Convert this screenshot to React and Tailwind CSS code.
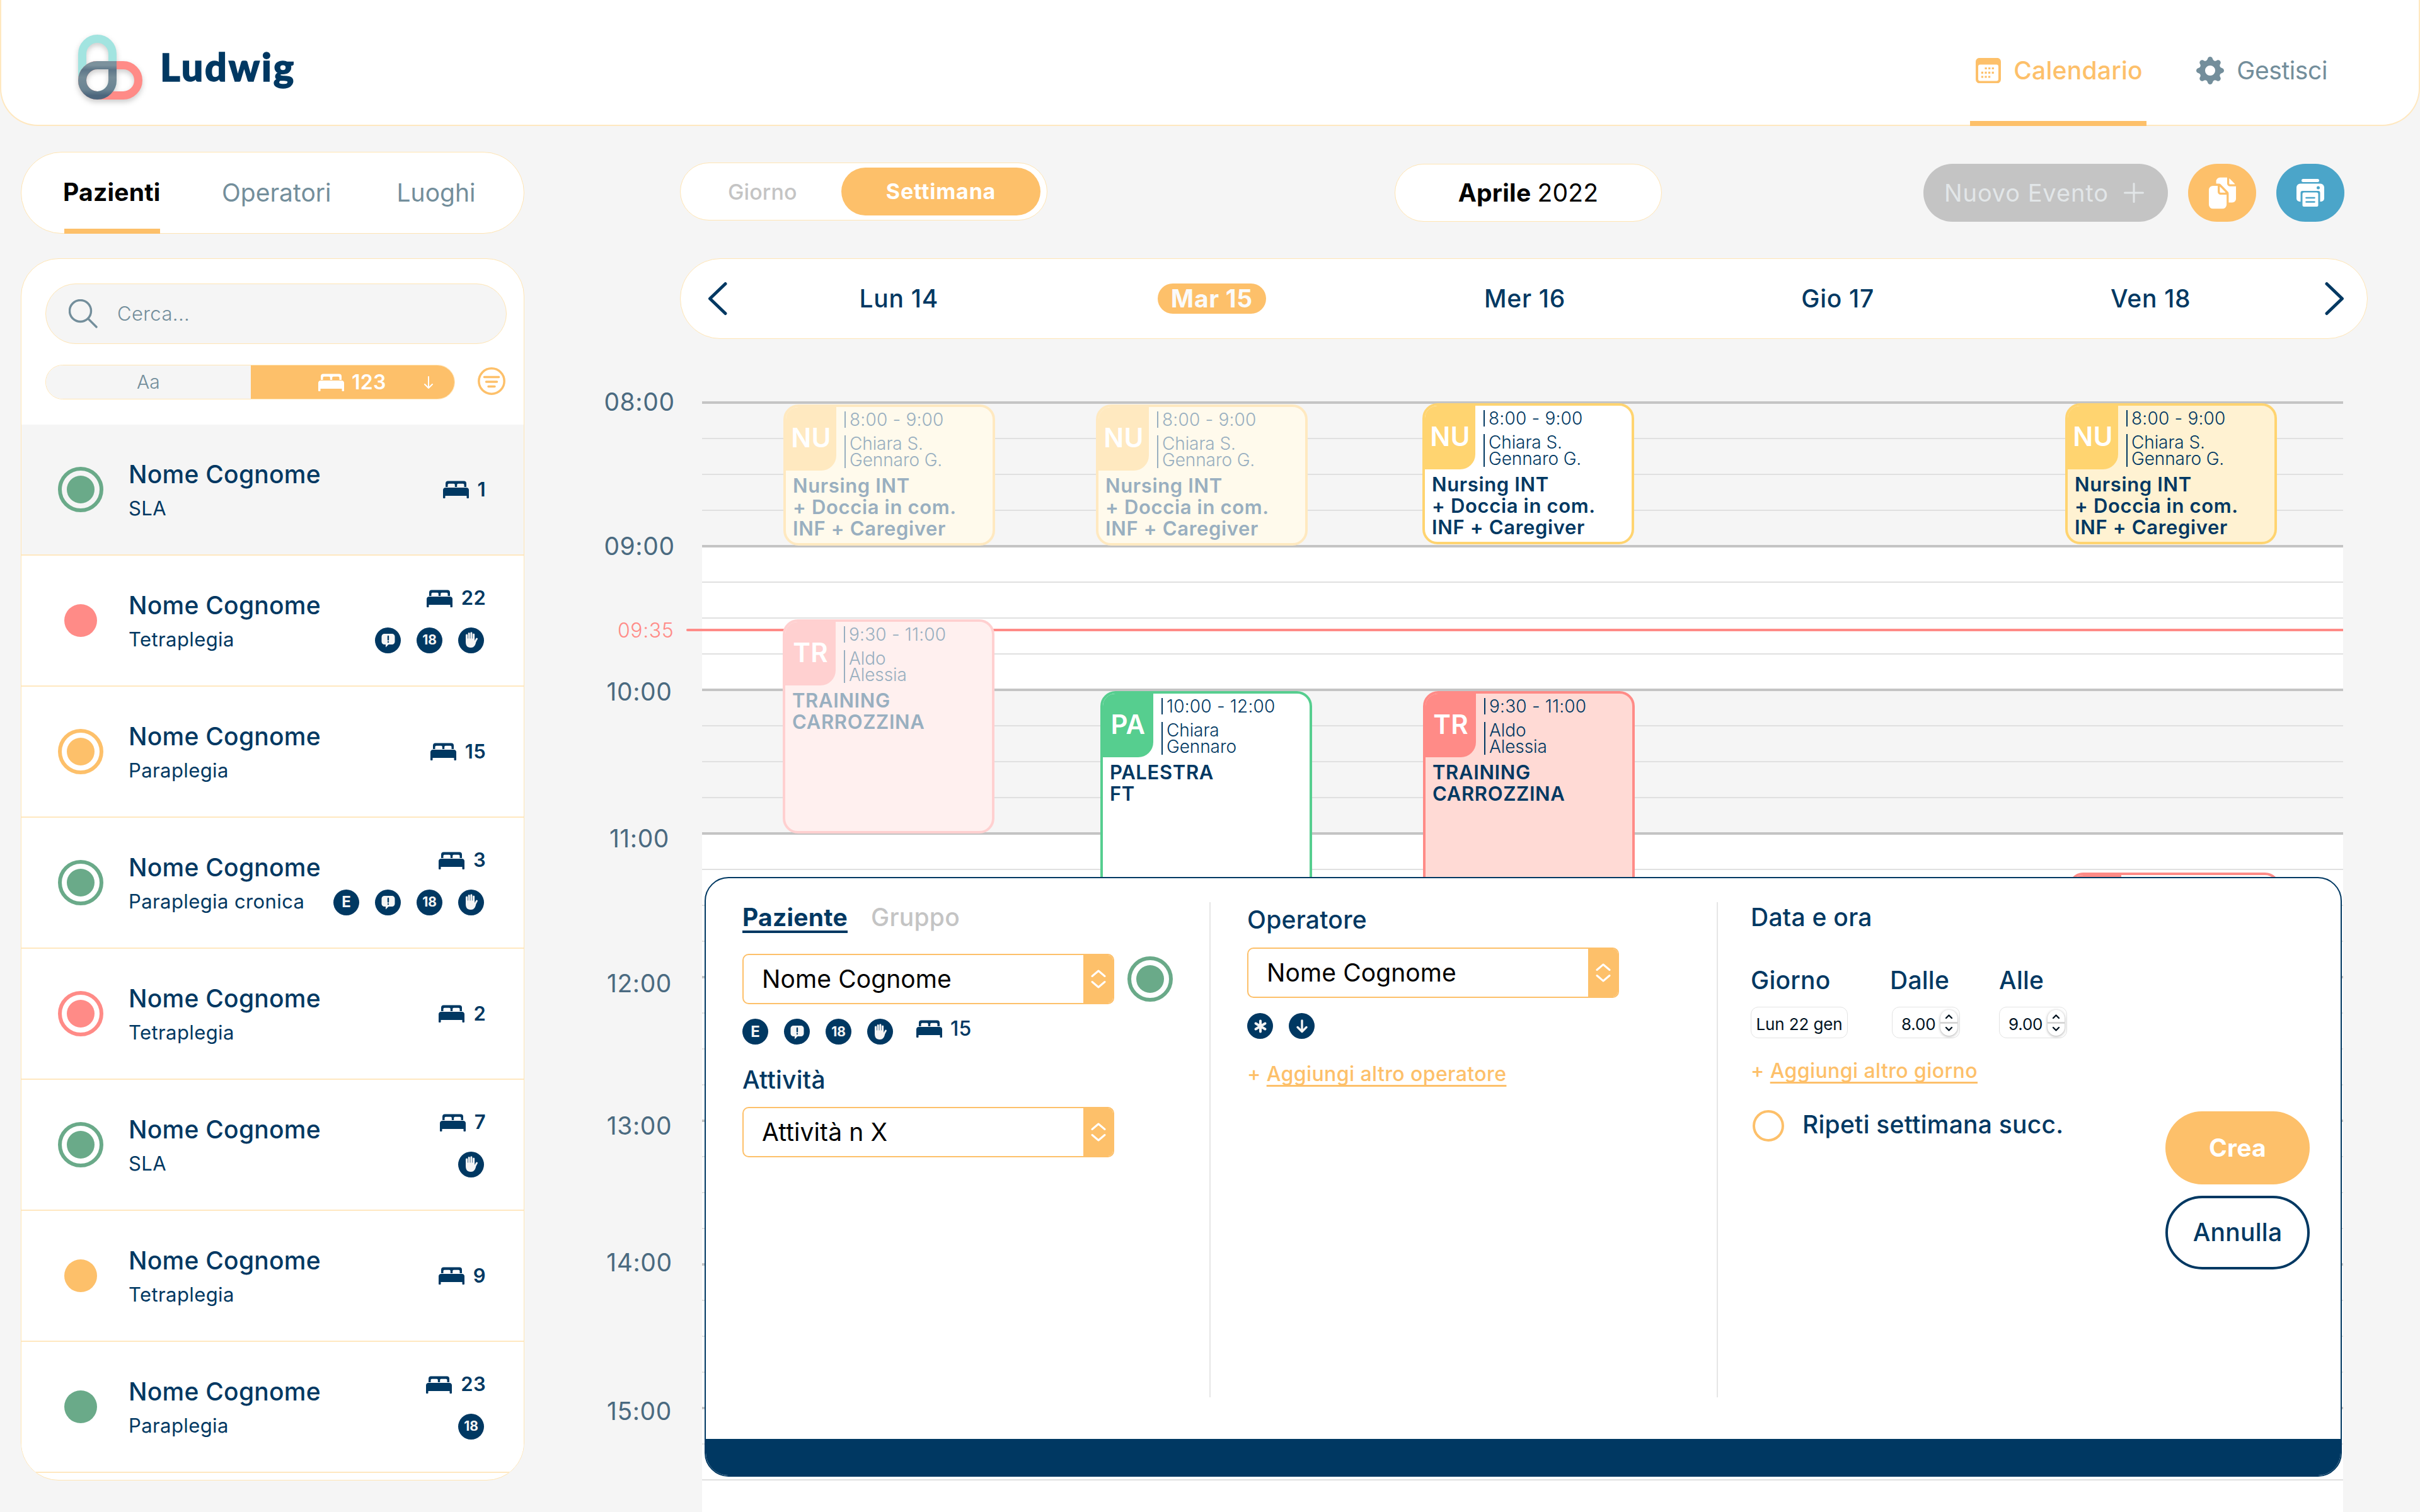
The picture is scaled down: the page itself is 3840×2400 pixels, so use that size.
import { BsGearFill } from 'react-icons/bs'
import { IoDocuments } from 'react-icons/io5'

const patients = [
  { diagnosis: 'SLA', bed: 1, dot: 'green', ring: true, badges: [], selected: true },
  { diagnosis: 'Tetraplegia', bed: 22, dot: 'red', ring: false, badges: ['chat', '18', 'hand'] },
  { diagnosis: 'Paraplegia', bed: 15, dot: 'yellow', ring: true, badges: [] },
  { diagnosis: 'Paraplegia cronica', bed: 3, dot: 'green', ring: true, badges: ['E', 'chat', '18', 'hand'] },
  { diagnosis: 'Tetraplegia', bed: 2, dot: 'red', ring: true, badges: [] },
  { diagnosis: 'SLA', bed: 7, dot: 'green', ring: true, badges: ['hand'] },
  { diagnosis: 'Tetraplegia', bed: 9, dot: 'yellow', ring: false, badges: [] },
  { diagnosis: 'Paraplegia', bed: 23, dot: 'green', ring: false, badges: ['18'] }
]

const days = ['Lun 14', 'Mar 15', 'Mer 16', 'Gio 17', 'Ven 18']

const hours = [
  { label: '08:00', className: '', band: 'bg-[#f5f5f5]' },
  { label: '09:00', className: 'mt-[181px]', band: 'bg-white' },
  { label: '10:00', className: 'mt-[183px]', band: 'bg-[#f5f5f5]' },
  { label: '11:00', className: 'mt-[185px]', band: 'bg-white' },
  { label: '12:00', className: 'mt-[182px]', band: 'bg-white' },
  { label: '13:00', className: 'mt-[178px]', band: 'bg-white' },
  { label: '14:00', className: 'mt-[169px]', band: 'bg-white' },
  { label: '15:00', className: 'mt-[188px]', band: 'bg-white' }
]

const eventStyles = {
  yellowPast: { card: 'border-[#ffe9c0] bg-[#fffaec] text-[#99afc0]', tag: 'bg-[#ffe9c0]', bar: 'border-[#99afc0]' },
  yellow: { card: 'border-[#ffd470] bg-white text-[#003862]', tag: 'bg-[#ffd470]', bar: 'border-[#003862]' },
  yellowSoft: { card: 'border-[#ffd470] bg-[#fff2d2] text-[#003862]', tag: 'bg-[#ffd470]', bar: 'border-[#003862]' },
  redPast: { card: 'border-[#ffd0d0] bg-[#fff0ef] text-[#99afc0]', tag: 'bg-[#ffd0d0]', bar: 'border-[#99afc0]' },
  red: { card: 'border-[#ff8b87] bg-[#ffdad5] text-[#003862]', tag: 'bg-[#ff8b87]', bar: 'border-[#003862]' },
  green: { card: 'border-[#56ce8f] bg-white text-[#003862]', tag: 'bg-[#56ce8f]', bar: 'border-[#003862]' }
}

const nursing = {
  code: 'NU',
  time: '8:00 - 9:00',
  people: ['Chiara S.', 'Gennaro G.'],
  title: ['Nursing INT', '+ Doccia in com.', 'INF + Caregiver']
}

const training = {
  code: 'TR',
  time: '9:30 - 11:00',
  people: ['Aldo', 'Alessia'],
  title: ['TRAINING', 'CARROZZINA']
}

const events = [
  { ...nursing, style: 'yellowPast', pos: 'left-[129px] top-[5px] h-[224px]' },
  { ...nursing, style: 'yellowPast', pos: 'left-[625px] top-[5px] h-[224px]' },
  { ...nursing, style: 'yellow', pos: 'left-[1143px] top-[3px] h-[224px]' },
  { ...nursing, style: 'yellowSoft', pos: 'left-[2163px] top-[3px] h-[224px]' },
  { ...training, style: 'redPast', pos: 'left-[128px] top-[346px] h-[340px]' },
  {
    code: 'PA',
    time: '10:00 - 12:00',
    people: ['Chiara', 'Gennaro'],
    title: ['PALESTRA', 'FT'],
    style: 'green',
    pos: 'left-[632px] top-[460px] h-[340px]'
  },
  { ...training, style: 'red', pos: 'left-[1144px] top-[460px] h-[340px]' }
]

const dotColors = {
  green: { bg: 'bg-[#6aaa89]', border: 'border-[#6aaa89]' },
  red: { bg: 'bg-[#ff8b87]', border: 'border-[#ff8b87]' },
  yellow: { bg: 'bg-[#fdc06a]', border: 'border-[#fdc06a]' }
}

const Logo = () => (
  <svg className="h-[120px] w-[120px] drop-shadow-[0_4px_4px_rgba(0,0,0,0.2)]" viewBox="0 0 120 120" fill="none" strokeWidth="13">
    <defs>
      <linearGradient id="loop" x1="0" y1="0" x2="0" y2="1">
        <stop offset="0" stopColor="#7c929d" />
        <stop offset="0.15" stopColor="#5d7688" />
        <stop offset="0.4" stopColor="#758c98" />
        <stop offset="0.8" stopColor="#6b8493" />
        <stop offset="1" stopColor="#4c667d" />
      </linearGradient>
    </defs>
    <rect x="16.500" y="14.500" width="48" height="90" rx="24" stroke="#a2e4e0" />
    <rect x="16.500" y="56.500" width="89" height="48" rx="24" stroke="#ff8b87" />
    <path d="M64.500 56.500H40.500A24 24 0 0 0 16.500 80.500A24 24 0 0 0 64.500 80.500Z" stroke="url(#loop)" />
  </svg>
)

const BedIcon = () => (
  <svg className="h-7 w-[41px] shrink-0" viewBox="0 0 41 28" fill="currentColor">
    <path d="M4 10V4.500A4 4 0 0 1 8 0.500H33A4 4 0 0 1 37 4.500V10H33.500V6.500A1.800 1.800 0 0 0 31.700 4.700H24A1.800 1.800 0 0 0 22.200 6.500V10H18.800V6.500A1.800 1.800 0 0 0 17 4.700H9.300A1.800 1.800 0 0 0 7.500 6.500V10Z" />
    <path d="M0 27V14.500A4 4 0 0 1 4 11H37A4 4 0 0 1 41 14.500V27A1 1 0 0 1 40 28H38.500A1 1 0 0 1 37.500 27V24H3.500V27A1 1 0 0 1 2.500 28H1A1 1 0 0 1 0 27Z" />
  </svg>
)

const HandIcon = () => (
  <svg className="h-[26px] w-[22px]" viewBox="0 0 22 26" fill="none" stroke="#f5f5f5" strokeLinecap="round">
    <path d="M3.500 14V5M7.200 12V2.500M10.900 12V1.800M14.600 13V4" strokeWidth="3" />
    <path d="M15.500 18L19.500 11" strokeWidth="2.800" />
    <path d="M2 10.500H16.100V15L18.500 14C18 20 16 25 10 25C4 25 2 21 2 16Z" fill="#f5f5f5" stroke="none" />
  </svg>
)

const PrinterIcon = () => (
  <svg className="h-11 w-11" viewBox="0 0 44 44" fill="currentColor">
    <rect x="8" y="0" width="28" height="5" rx="2.500" />
    <path d="M6 7.500H38A6 6 0 0 1 44 13.500V31A5 5 0 0 1 39 36H37.500V22A3 3 0 0 0 34.500 19H9.500A3 3 0 0 0 6.500 22V36H5A5 5 0 0 1 0 31V13.500A6 6 0 0 1 6 7.500ZM34.500 11.500A2.500 2.500 0 1 0 34.500 16.500A2.500 2.500 0 1 0 34.500 11.500Z" fillRule="evenodd" />
    <rect x="9.500" y="21.500" width="25" height="22.500" rx="2.500" />
    <path d="M15.500 30H28.500M15.500 36.500H28.500" stroke="#4ba5c9" strokeWidth="2.600" strokeLinecap="round" />
  </svg>
)

const Badge = ({ type }) => (
  <span className="flex size-[41px] shrink-0 items-center justify-center rounded-full bg-[#003862] text-[21px] font-bold tracking-normal text-[#f5f5f5]">
    {type === 'chat' && (
      <svg className="size-6" viewBox="0 0 24 24" fill="#f5f5f5">
        <path d="M6 2H18A4.500 4.500 0 0 1 22.500 6.500V14.500A4.500 4.500 0 0 1 18 19H12.500L8 23.500V19H6A4.500 4.500 0 0 1 1.500 14.500V6.500A4.500 4.500 0 0 1 6 2Z" />
        <path d="M12 6V11.500M12 15V15.100" stroke="#003862" strokeWidth="2.400" strokeLinecap="round" />
      </svg>
    )}
    {type === 'hand' && <HandIcon />}
    {type === 'star' && (
      <svg className="size-6" viewBox="0 0 24 24" stroke="#f5f5f5" strokeWidth="4" strokeLinecap="round">
        <path d="M12 3.500V20.500M4.500 7.500L19.500 16.500M19.500 7.500L4.500 16.500" />
      </svg>
    )}
    {type === 'down' && (
      <svg className="size-6" viewBox="0 0 24 24" fill="none" stroke="#f5f5f5" strokeWidth="3.400" strokeLinecap="round" strokeLinejoin="round">
        <path d="M12 3V20M5 13.500L12 20.500L19 13.500" />
      </svg>
    )}
    {type === '18' && '18'}
    {type === 'E' && <span className="text-2xl">E</span>}
  </span>
)

const StatusDot = ({ color, ring }) => {
  const c = dotColors[color]
  if (!ring) return <span className={`size-[52px] rounded-full ${c.bg}`} />
  return (
    <span className={`flex size-[72px] shrink-0 items-center justify-center rounded-full border-[6px] ${c.border}`}>
      <span className={`size-11 rounded-full ${c.bg}`} />
    </span>
  )
}

const PatientRow = ({ patient }) => (
  <li className={`flex h-[208px] items-center border-b-2 border-[#ffe8c0] pr-[60px] ${patient.selected ? 'bg-[#f5f5f5]' : 'bg-white'}`}>
    <div className="flex w-[170px] justify-center pl-[18px]">
      <StatusDot color={patient.dot} ring={patient.ring} />
    </div>
    <div className="flex-1 pt-[7px] whitespace-nowrap text-[#003862]">
      <p className="text-[39px] leading-[52px] font-medium">Nome Cognome</p>
      <p className="text-[31px] leading-[56px] tracking-[0.4px]">{patient.diagnosis}</p>
    </div>
    <div className="flex flex-col items-end text-[#003862]">
      <div className="flex h-11 items-center gap-3.5 text-[31px] font-semibold tracking-[0.3px]">
        <BedIcon />
        {patient.bed}
      </div>
      {patient.badges.length > 0 && (
        <div className="mt-6 mr-[3px] mb-1.5 flex gap-[25px]">
          {patient.badges.map((b) => <Badge key={b} type={b} />)}
        </div>
      )}
    </div>
  </li>
)

const EventCard = ({ event }) => {
  const s = eventStyles[event.style]
  return (
    <div className={`absolute w-[336px] overflow-hidden rounded-[24px] border-4 ${s.card} ${event.pos}`}>
      <div className="flex h-[101px]">
        <div className={`flex w-[80px] items-center justify-center rounded-br-[24px] pb-1 text-[42px] font-semibold text-white ${s.tag}`}>
          {event.code}
        </div>
        <div className="ml-[13px] pt-[7px] text-[28px] font-light tracking-[0.2px] whitespace-nowrap">
          <p className={`border-l-2 pl-1.5 leading-[26px] ${s.bar}`}>{event.time}</p>
          <div className={`mt-3 border-l-2 pl-1.5 leading-[26px] tracking-[-0.1px] ${s.bar}`}>
            {event.people.map((p) => <p key={p}>{p}</p>)}
          </div>
        </div>
      </div>
      <div className="mt-[7px] pl-[11px] text-[31px] leading-[34px] font-semibold tracking-[0.65px] whitespace-nowrap">
        {event.title.map((t) => <p key={t}>{t}</p>)}
      </div>
    </div>
  )
}

const Select = ({ value }) => (
  <div className="flex h-20 w-[590px] items-center justify-between overflow-hidden rounded-[10px] border-2 border-[#fdc06a] bg-white">
    <span className="pl-[29px] text-[39px] font-normal tracking-[0.1px] text-black">{value}</span>
    <span className="flex h-full w-[47px] items-center justify-center bg-[#fdc06a]">
      <svg className="h-[30px] w-6" viewBox="0 0 24 30" fill="none" stroke="white" strokeWidth="3" strokeLinecap="round" strokeLinejoin="round">
        <path d="M2 10.500L12 2L22 10.500M2 19.500L12 28L22 19.500" />
      </svg>
    </span>
  </div>
)

const TimeInput = ({ value }) => (
  <div className="flex h-[50px] w-[108px] items-center justify-between rounded-[12px] border border-[#e3e3e3] pr-[3px] pl-3.5 text-[26px] tracking-[-0.2px] text-[#00121f]">
    <span className="pt-1">{value}</span>
    <span className="flex h-[41px] w-[27px] items-center justify-center overflow-hidden rounded-full bg-white shadow-[0_1px_4px_rgba(0,0,0,0.35)]">
      <svg className="h-[41px] w-[27px]" viewBox="0 0 27 41" fill="none" stroke="#00121f" strokeWidth="2.400" strokeLinecap="round" strokeLinejoin="round">
        <path d="M0 20.500H27" stroke="#cfcfcf" />
        <path d="M9 13L13.500 8.500L18 13M9 28L13.500 32.500L18 28" />
      </svg>
    </span>
  </div>
)

const BookingForm = () => (
  <div className="absolute top-[755px] left-1 flex h-[952px] w-[2598px] flex-col justify-between overflow-hidden rounded-[38px] border-2 border-[#003862] bg-white font-medium text-[#003862]">
    <div className="mt-[38px] flex h-[786px]">
      <div className="w-[801px] border-r-2 border-[#e6e6e6] pl-[58px]">
        <div className="flex gap-[37px] text-[39px] leading-[48px]">
          <span className="h-[49px] border-b-4 border-[#003862] font-bold">Paziente</span>
          <span className="text-[#c4c4c4]">Gruppo</span>
        </div>
        <div className="mt-[33px] flex items-center gap-[21px]">
          <Select value="Nome Cognome" />
          <StatusDot color="green" ring />
        </div>
        <div className="mt-[23px] flex gap-[25px]">
          <Badge type="E" />
          <Badge type="chat" />
          <Badge type="18" />
          <Badge type="hand" />
          <div className="ml-3 flex h-8 items-center gap-[13px] text-[32px] font-medium">
            <BedIcon />
            15
          </div>
        </div>
        <p className="mt-8 text-[39px] leading-[48px]">Attività</p>
        <div className="mt-[19px]">
          <Select value="Attività n X" />
        </div>
      </div>
      <div className="w-[805px] border-r-2 border-[#e6e6e6] pt-1 pl-[58px]">
        <p className="text-[39px] leading-[48px]">Operatore</p>
        <div className="mt-5">
          <Select value="Nome Cognome" />
        </div>
        <div className="mt-6 flex gap-[25px]">
          <Badge type="star" />
          <Badge type="down" />
        </div>
        <p className="mt-9 text-[32px] leading-10 tracking-[0.4px] text-[#fdc06a]">
          + <span className="underline decoration-[3px] underline-offset-[6px] [text-decoration-skip-ink:none]">Aggiungi altro operatore</span>
        </p>
      </div>
      <div className="w-[710px] pl-[52px]">
        <p className="text-[39px] leading-[48px]">Data e ora</p>
        <div className="mt-[52px] grid grid-cols-[221px_173px_auto] text-[39px] leading-[48px]">
          <span>Giorno</span>
          <span>Dalle</span>
          <span>Alle</span>
        </div>
        <div className="mt-[18px] grid grid-cols-[224px_170px_auto] font-normal">
          <div className="flex h-[50px] w-[154px] items-center justify-center rounded-[12px] border border-[#e3e3e3] pt-1 text-[26px] tracking-[-0.1px] text-[#00121f]">
            Lun 22 gen
          </div>
          <TimeInput value="8.00" />
          <TimeInput value="9.00" />
        </div>
        <p className="mt-[32px] mb-px text-[32px] leading-10 tracking-[0.4px] text-[#fdc06a]">
          + <span className="underline decoration-[3px] underline-offset-[6px] [text-decoration-skip-ink:none]">Aggiungi altro giorno</span>
        </p>
        <div className="mt-[42px] flex h-[50px] gap-[29px] text-[39px] leading-[46px] whitespace-nowrap">
          <span className="ml-[3px] size-[50px] rounded-full border-4 border-[#fdc06a]" />
          <span>Ripeti settimana succ.</span>
        </div>
      </div>
      <div className="flex flex-col gap-[18px] pt-[332px] text-[39px]">
        <button className="h-[116px] w-[229px] rounded-full bg-[#fdc06a] font-bold text-white">Crea</button>
        <button className="h-[117px] w-[229px] rounded-full border-4 border-[#003862]">Annulla</button>
      </div>
    </div>
    <div className="h-[58px] bg-[#003862]" />
  </div>
)

const Header = () => (
  <header className="flex h-[200px] justify-between rounded-b-[60px] border-2 border-t-0 border-[#ffe8c0] bg-white">
    <div className="flex items-start pt-[47px] pl-[112px]">
      <Logo />
      <span className="ml-[20px] pt-[17px] font-['Lato'] text-[61px] leading-[84px] font-black tracking-[2.900px] text-[#003862] [-webkit-text-stroke:1.500px_#003862]">Ludwig</span>
    </div>
    <nav className="flex gap-[79px] pr-[145px] text-[39px]">
      <div className="flex h-[200px] w-[280px] items-center gap-5 border-b-8 border-[#fdc06a] pt-8 pl-[9px] font-medium text-[#fdc06a]">
        <svg className="size-10 shrink-0" viewBox="0 0 40 40" fill="currentColor">
          <path d="M7 0H33A6 6 0 0 1 40 6V34A6 6 0 0 1 33 40H7A6 6 0 0 1 0 34V6A6 6 0 0 1 7 0ZM7 10.500A3 3 0 0 0 4 13.500V33.500A3 3 0 0 0 7 36.500H33A3 3 0 0 0 36 33.500V13.500A3 3 0 0 0 33 10.500Z" fillRule="evenodd" />
          <path d="M14.500 16.500H31M8.800 23.300H31M8.800 30H25.500" stroke="currentColor" strokeWidth="3.200" strokeDasharray="3.200 2.400" />
        </svg>
        Calendario
      </div>
      <div className="flex h-[200px] items-center gap-5 pt-6 tracking-[-0.4px] text-[#738e9b]">
        <BsGearFill className="size-11 shrink-0" />
        Gestisci
      </div>
    </nav>
  </header>
)

const Sidebar = () => (
  <aside className="ml-[33px] w-[799px] pt-[41px]">
    <div className="flex h-[130px] rounded-full border border-[#ffe5b4] bg-white pl-[68px] text-[39px] leading-[128px] text-[#738e9b]">
      <span className="h-[129px] w-[152px] border-b-8 border-[#fdc06a] -indent-[2px] leading-[126px] font-bold text-black">Pazienti</span>
      <span className="ml-[98px] tracking-normal">Operatori</span>
      <span className="ml-[104px] tracking-normal">Luoghi</span>
    </div>

    <div className="mt-[39px] h-[1940px] overflow-hidden rounded-[60px] border border-[#ffe5b4] bg-white">
      <div className="ml-[38px] mt-[39px] flex h-24 w-[732px] items-center rounded-full border border-[#ffe5b4] bg-[#f5f5f5] pl-9 text-[31px] font-light tracking-[0.4px] text-[#738e9b]">
        <svg className="size-[46px]" viewBox="0 0 46 46" fill="none" stroke="currentColor" strokeWidth="3.400" strokeLinecap="round">
          <circle cx="18.500" cy="18.500" r="17" />
          <path d="M31 31L44 44" />
        </svg>
        <span className="ml-[31px]">Cerca...</span>
      </div>
      <div className="ml-[38px] mt-[33px] flex h-[55px]">
        <div className="flex w-[650px] shrink-0 overflow-hidden rounded-full border border-[#ffe5b4]">
          <div className="flex w-[325px] items-center justify-center bg-[#f5f5f5] text-[30px] font-light text-[#738e9b]">Aa</div>
          <div className="flex flex-1 items-center bg-[#fdc06a] pl-[107px] text-[32px] font-semibold text-white">
            <BedIcon />
            <span className="ml-3 w-[114px]">123</span>
            <svg className="h-5 w-4" viewBox="0 0 16 20" fill="none" stroke="white" strokeWidth="2" strokeLinecap="round" strokeLinejoin="round">
              <path d="M8 1V19M2 13L8 19L14 13" />
            </svg>
          </div>
        </div>
        <svg className="mt-1 ml-9 size-11 shrink-0" viewBox="0 0 44 44" fill="none" stroke="#fdc06a" strokeWidth="3.500" strokeLinecap="round">
          <circle cx="22" cy="22" r="20.200" />
          <path d="M10.500 15.500H33.500M13.500 23H30.500M17 30.500H27" />
        </svg>
      </div>
      <ul className="mt-10">
        {patients.map((p, i) => <PatientRow key={i} patient={p} />)}
      </ul>
    </div>
  </aside>
)

const Toolbar = () => (
  <div className="ml-[159px] flex h-[94px] items-end">
    <div className="mb-0.5 flex h-[92px] w-[583px] items-center rounded-full border border-[#ffe5b4] bg-white pl-[75px] text-[34px]">
      <span className="w-[180px] font-medium tracking-[0.1px] text-[#c4c4c4]">Giorno</span>
      <span className="h-[76px] w-[316px] rounded-full bg-[#fdc06a] text-center leading-[76px] font-bold tracking-[0.8px] text-white">Settimana</span>
    </div>
    <div className="ml-[551px] flex h-[92px] w-[424px] items-center justify-center gap-2.5 rounded-full border border-[#ffe5b4] bg-white text-[39px] text-black">
      <span className="font-bold">Aprile</span>
      <span>2022</span>
    </div>
    <button className="ml-[415px] flex h-[92px] w-[388px] items-center rounded-full bg-[#c4c4c4] pl-[33px] text-[38px] tracking-[0.9px] text-[#e2e6e8]">
      <span className="w-[285px] text-left whitespace-nowrap">Nuovo Evento</span>
      <svg className="size-8" viewBox="0 0 32 32" stroke="currentColor" strokeWidth="3" strokeLinecap="round">
        <path d="M16 1.500V30.500M1.500 16H30.500" />
      </svg>
    </button>
    <button className="ml-8 flex h-[92px] w-[108px] items-center justify-center rounded-full bg-[#fdc06a] text-white">
      <IoDocuments className="size-[53px]" />
    </button>
    <button className="ml-8 flex h-[92px] w-[108px] items-center justify-center rounded-full bg-[#4ba5c9] text-white">
      <PrinterIcon />
    </button>
  </div>
)

const DaysBar = () => (
  <div className="mt-[58px] ml-[159px] flex h-32 w-[2678px] items-center rounded-full border border-[#ffe5b4] bg-white pl-[43px] text-[39px] font-medium tracking-[0.7px] text-[#003862]">
    <svg className="h-[54px] w-[31px]" viewBox="0 0 31 54" fill="none" stroke="currentColor" strokeWidth="5" strokeLinecap="round" strokeLinejoin="round">
      <path d="M28 3.500L3.500 27L28 50.500" />
    </svg>
    <div className="ml-[24px] grid w-[2483px] grid-cols-5">
      {days.map((day) => (
        <div key={day} className="flex items-center justify-center">
          {day === 'Mar 15' ? (
            <span className="h-12 w-[172px] rounded-full bg-[#fdc06a] text-center leading-[48px] font-bold text-[#fafafa]">{day}</span>
          ) : (
            <span>{day}</span>
          )}
        </div>
      ))}
    </div>
    <svg className="ml-7 h-[54px] w-[31px]" viewBox="0 0 31 54" fill="none" stroke="currentColor" strokeWidth="5" strokeLinecap="round" strokeLinejoin="round">
      <path d="M3 3.500L27.500 27L3 50.500" />
    </svg>
  </div>
)

const Calendar = () => (
  <div className="mt-[76px] flex">
    <div className="mr-[5px] flex w-[189px] flex-col text-center text-[39px] leading-[48px] tracking-[0.6px] text-[#4a6a80]">
      {hours.map((h) => <span key={h.label} className={h.className}>{h.label}</span>)}
    </div>
    <div className="relative mt-[23px] h-[1763px] w-[2604px]">
      <div className="h-full overflow-hidden">
        {hours.map((h) => (
          <div key={h.label} className={`flex h-[228px] flex-col border-t-4 border-[#c4c4c4] ${h.band}`}>
            <div className="h-[54px]" />
            <div className="h-[57px] border-t-2 border-[#e0e0e0]" />
            <div className="h-[57px] border-t-2 border-[#e0e0e0]" />
            <div className="flex-1 border-t-2 border-[#e0e0e0]" />
          </div>
        ))}
      </div>
      {/* current time marker */}
      <span className="absolute top-[344px] left-[-134px] text-[32px] leading-10 font-light tracking-[0.6px] text-[#ff8b87]">09:35</span>
      <div className="absolute top-[361px] left-[-25px] h-1 w-[2629px] rounded-l-full bg-[#ff8b87]" />
      {events.map((e, i) => <EventCard key={i} event={e} />)}
      {/* next booking, only its top edge shows above the form */}
      <div className="absolute top-[748px] left-[2168px] h-[224px] w-[336px] overflow-hidden rounded-[24px] border-4 border-[#ff8b87] bg-white">
        <div className="h-[101px] w-[80px] rounded-br-[24px] bg-[#ff8b87]" />
      </div>
      <BookingForm />
    </div>
  </div>
)

const App = () => (
  <div className="h-[2400px] w-[3840px] overflow-hidden bg-[#f5f5f5] font-['Inter',sans-serif] tracking-[0.25px]">
    <Header />
    <main className="flex">
      <Sidebar />
      <section className="ml-[88px] flex-1 pt-[58px]">
        <Toolbar />
        <DaysBar />
        <Calendar />
      </section>
    </main>
  </div>
)

export default App
